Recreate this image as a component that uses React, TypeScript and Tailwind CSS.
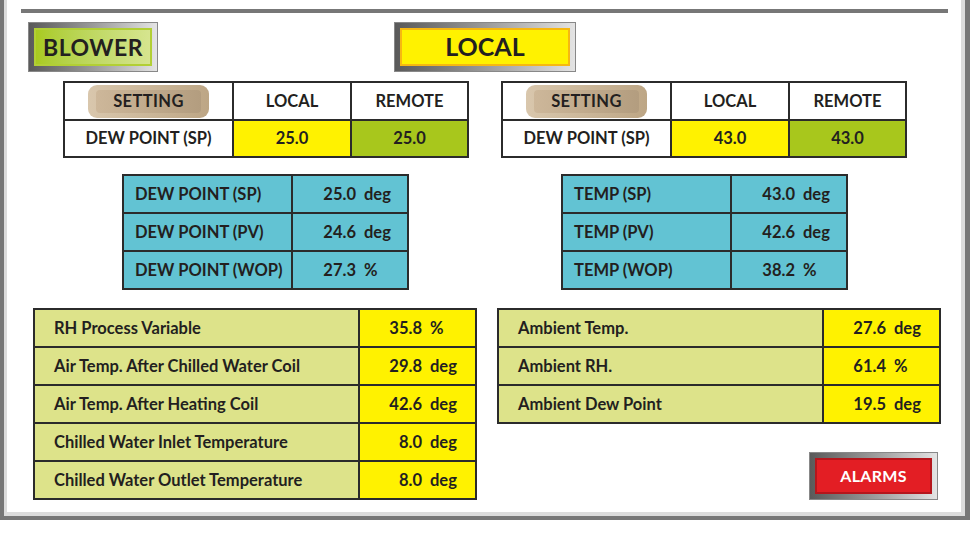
import React from 'react';

const font = { fontFamily: 'Lato, "Open Sans", sans-serif' };

function FrameButton({ label, inner, text, width, size }: { label: string; inner: string; text: string; width: string; size: string }) {
  return (
    <div className={`${width} h-full p-[5px] bg-gradient-to-r from-[#5a5a5a] via-[#9a9a9a] to-[#e4e4e4] border border-[#888]`}>
      <div className={`h-full flex items-center justify-center font-bold ${inner} ${text} ${size}`}>{label}</div>
    </div>
  );
}

function SettingPill() {
  return (
    <div className="w-[121px] h-[33px] rounded-[9px] bg-gradient-to-r from-[#d9c7ad] to-[#bda685] p-[5px_8px]">
      <div className="h-full rounded-[4px] bg-gradient-to-r from-[#cdb79a] to-[#b39d7f] flex items-center justify-center text-[16.5px] font-bold tracking-[0.4px] text-[#231f20]">
        SETTING
      </div>
    </div>
  );
}

function ModeTable({ value }: { value: string }) {
  return (
    <div className="w-[406px] grid grid-cols-[167px_116px_1fr] grid-rows-[36px_35px] gap-[2px] p-[2px] bg-[#2b2b2b] text-[16.5px] font-bold text-[#231f20]">
      <div className="bg-white flex items-center justify-center"><SettingPill /></div>
      <div className="bg-white flex items-center justify-center">LOCAL</div>
      <div className="bg-white flex items-center justify-center">REMOTE</div>
      <div className="bg-white flex items-center justify-center">DEW POINT (SP)</div>
      <div className="bg-[#fff200] flex items-center justify-center">{value}</div>
      <div className="bg-[#a8c71c] flex items-center justify-center">{value}</div>
    </div>
  );
}

function Value({ num, unit, numW }: { num: string; unit: string; numW: string }) {
  return (
    <div className="flex items-center h-full">
      <span className={`${numW} text-right`}>{num}</span>
      <span className="ml-[8px]">{unit}</span>
    </div>
  );
}

function CyanTable({ rows }: { rows: [string, string, string][] }) {
  return (
    <div className="w-[287px] grid grid-cols-[167px_1fr] auto-rows-[36px] gap-[2px] p-[2px] bg-[#2b2b2b] text-[16.5px] font-bold text-[#231f20]">
      {rows.map(([label, num, unit]) => (
        <React.Fragment key={label}>
          <div className="bg-[#62c3d3] flex items-center pl-[11px]">{label}</div>
          <div className="bg-[#62c3d3]"><Value num={num} unit={unit} numW="w-[63px]" /></div>
        </React.Fragment>
      ))}
    </div>
  );
}

function ProcessTable({ rows }: { rows: [string, string, string][] }) {
  return (
    <div className="w-[444px] grid grid-cols-[323px_1fr] auto-rows-[36px] gap-[2px] p-[2px] bg-[#2b2b2b] text-[16.5px] font-bold text-[#231f20]">
      {rows.map(([label, num, unit]) => (
        <React.Fragment key={label}>
          <div className="bg-[#dde38a] flex items-center pl-[19px]">{label}</div>
          <div className="bg-[#fff200]"><Value num={num} unit={unit} numW="w-[62px]" /></div>
        </React.Fragment>
      ))}
    </div>
  );
}

export default function App() {
  return (
    <div className="w-[970px] h-[546px] bg-white overflow-hidden" style={font}>
      <div className="h-[520px] border-l-[4px] border-r-[5px] border-b-[4px] border-[#777]">
        <div className="h-full border-l-[3px] border-r-[4px] border-b-[4px] border-[#dcdcdc] bg-white">
          {/* top rule */}
          <div className="pt-[9px] pl-[14px]">
            <div className="w-[927px] h-[4px] bg-[#777]" />
          </div>

          {/* mode buttons */}
          <div className="mt-[9px] h-[50px] flex pl-[21px]">
            <FrameButton label="BLOWER" width="w-[130px]" size="text-[23px] tracking-[0.5px]" text="text-[#231f20]" inner="bg-gradient-to-r from-[#a9cb1e] to-[#d6e58f] border-2 border-[#b2cf35]" />
            <div className="ml-[236px]">
              <FrameButton label="LOCAL" width="w-[182px]" size="text-[25px]" text="text-[#231f20]" inner="bg-[#fff200] border-2 border-[#f6b811]" />
            </div>
          </div>

          {/* setting tables */}
          <div className="mt-[9px] flex pl-[56px] gap-[32px]">
            <ModeTable value="25.0" />
            <ModeTable value="43.0" />
          </div>

          {/* cyan tables */}
          <div className="mt-[16px] flex pl-[115px] gap-[152px]">
            <CyanTable rows={[['DEW POINT (SP)', '25.0', 'deg'], ['DEW POINT (PV)', '24.6', 'deg'], ['DEW POINT (WOP)', '27.3', '%']]} />
            <CyanTable rows={[['TEMP (SP)', '43.0', 'deg'], ['TEMP (PV)', '42.6', 'deg'], ['TEMP (WOP)', '38.2', '%']]} />
          </div>

          {/* process tables */}
          <div className="mt-[18px] flex pl-[26px] gap-[20px]">
            <ProcessTable
              rows={[
                ['RH Process Variable', '35.8', '%'],
                ['Air Temp. After Chilled Water Coil', '29.8', 'deg'],
                ['Air Temp. After Heating Coil', '42.6', 'deg'],
                ['Chilled Water Inlet Temperature', '8.0', 'deg'],
                ['Chilled Water Outlet Temperature', '8.0', 'deg'],
              ]}
            />
            <div className="flex flex-col">
              <ProcessTable
                rows={[
                  ['Ambient Temp.', '27.6', 'deg'],
                  ['Ambient RH.', '61.4', '%'],
                  ['Ambient Dew Point', '19.5', 'deg'],
                ]}
              />
              <div className="mt-[28px] ml-[312px] h-[48px]">
                <FrameButton label="ALARMS" width="w-[129px]" size="text-[16px] tracking-[0.3px]" text="text-white" inner="bg-[#e31e24] border-2 border-[#b5161c]" />
              </div>
            </div>
          </div>
        </div>
      </div>
    </div>
  );
}
